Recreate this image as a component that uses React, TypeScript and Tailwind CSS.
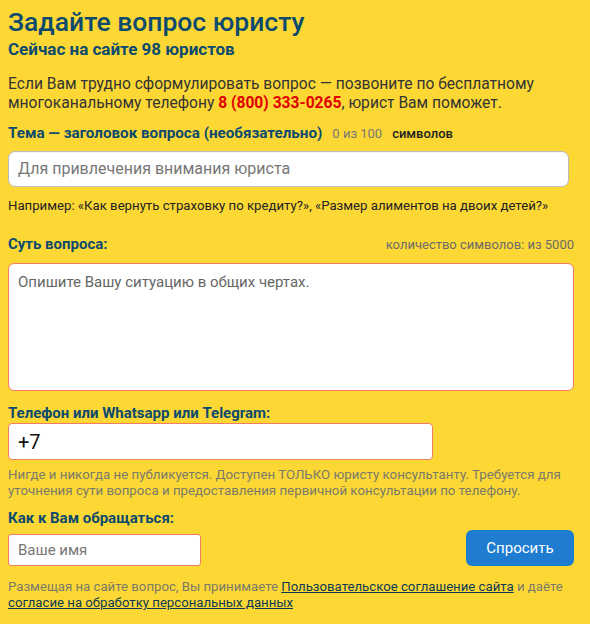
import React from "react";

export default function App() {
  return (
    <div className="min-h-[624px] w-[590px] bg-[#fdd835] px-2 pt-[5px] font-['Roboto',sans-serif] text-[#333]">
      <h1 className="text-[26.5px] font-medium leading-[34px] text-[#0c4a6e]">Задайте вопрос юристу</h1>
      <p className="text-[17px] font-bold leading-[20px] text-[#0c4a6e]">Сейчас на сайте 98 юристов</p>

      <p className="mt-[16px] text-[15.6px] leading-[19px] text-[#333]">
        Если Вам трудно сформулировать вопрос — позвоните по бесплатному многоканальному телефону{" "}
        <span className="font-bold text-[#e10000]">8 (800) 333-0265</span>, юрист Вам поможет.
      </p>

      <div className="mt-[9px] flex items-baseline gap-[10px]">
        <span className="text-[15.2px] font-bold text-[#0c4a6e]">Тема — заголовок вопроса (необязательно)</span>
        <span className="text-[13px] text-[#777]">0 из 100</span>
        <span className="text-[13px] font-medium text-[#222]">символов</span>
      </div>
      <div className="mt-[6px] flex h-[36px] w-[561px] items-center rounded-[7px] border border-[#bbb] bg-white px-[9px] text-[16px] text-[#777] shadow-[inset_0_1px_1px_rgba(0,0,0,0.05)]">
        Для привлечения внимания юриста
      </div>
      <p className="mt-[11px] text-[13.2px] leading-[16px] text-[#222]">
        Например: «Как вернуть страховку по кредиту?», «Размер алиментов на двоих детей?»
      </p>

      <div className="mt-[19px] flex items-baseline justify-between pr-[8px]">
        <span className="text-[15px] font-bold text-[#0c4a6e]">Суть вопроса:</span>
        <span className="text-[13px] text-[#6b6b6b]">количество символов: из 5000</span>
      </div>
      <div className="mt-[8px] h-[128px] w-[566px] rounded-[6px] border border-[#f47c62] bg-white px-[9px] pt-[7px] text-[15px] text-[#666]">
        Опишите Вашу ситуацию в общих чертах.
      </div>

      <p className="mt-[13px] text-[15px] font-bold leading-[18px] text-[#0c4a6e]">Телефон или Whatsapp или Telegram:</p>
      <div className="mt-[1px] flex h-[37px] w-[425px] items-center rounded-[4px] border border-[#f47c62] bg-white px-[9px] text-[20px] text-[#111]">
        +7
      </div>
      <p className="mt-[7px] text-[13.3px] leading-[16px] text-[#7a7a6a]">
        Нигде и никогда не публикуется. Доступен ТОЛЬКО юристу консультанту. Требуется для уточнения сути вопроса и предоставления первичной консультации по телефону.
      </p>

      <p className="mt-[10px] text-[15px] font-bold leading-[18px] text-[#0c4a6e]">Как к Вам обращаться:</p>
      <div className="mt-[2px] flex items-center justify-between pr-[8px]">
        <div className="mt-[5px] flex h-[32px] w-[193px] items-center rounded-[3px] border border-[#f47c62] bg-white px-[9px] text-[15px] text-[#777]">
          Ваше имя
        </div>
        <button className="h-[36px] w-[108px] rounded-[6px] bg-[#1e7dd0] text-[15px] text-white">Спросить</button>
      </div>

      <p className="mt-[13px] text-[13.2px] leading-[16px] text-[#7a7a6a]">
        Размещая на сайте вопрос, Вы принимаете{" "}
        <span className="text-[#0c3a55] underline">Пользовательское соглашение сайта</span> и даёте{" "}
        <span className="text-[#0c3a55] underline">согласие на обработку персональных данных</span>
      </p>
    </div>
  );
}
